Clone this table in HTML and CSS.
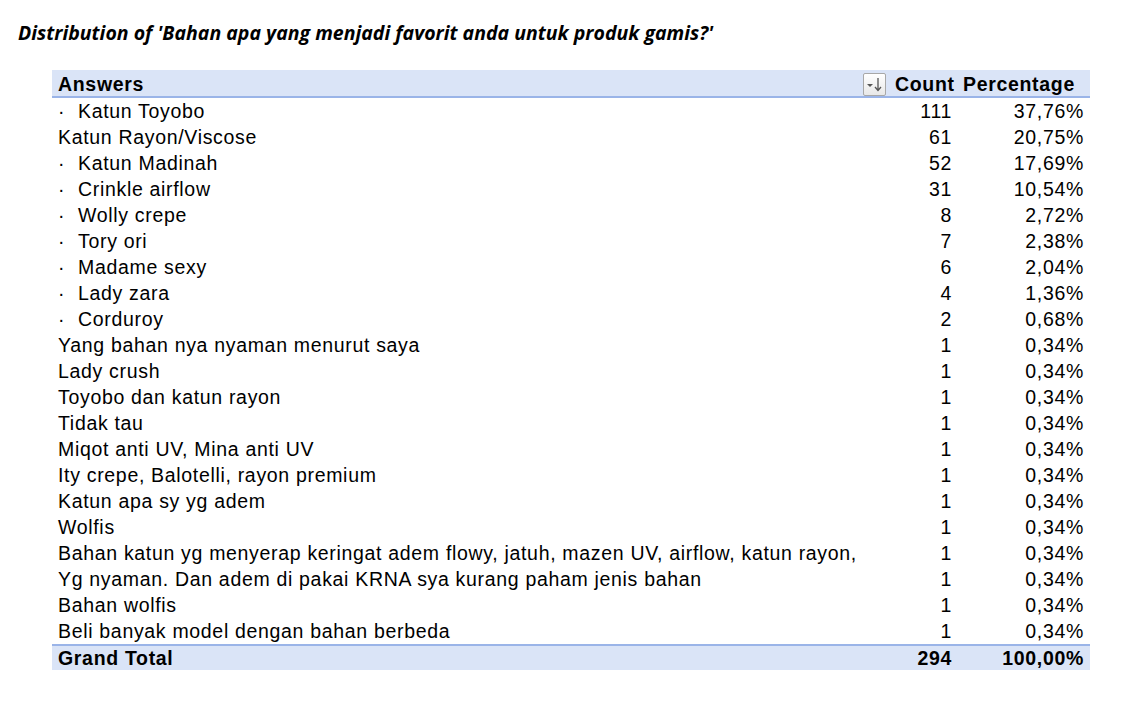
FILE: index.html
```html
<!DOCTYPE html>
<html>
<head>
<meta charset="utf-8">
<link rel="stylesheet" href="styles.css">
</head>
<body>
<h1 class="title">Distribution of 'Bahan apa yang menjadi favorit anda untuk produk gamis?'</h1>
<table class="pivot">
  <thead>
    <tr>
      <th class="c-ans">Answers</th>
      <th class="c-filter"><span class="filter"><svg width="21" height="21" viewBox="0 0 21 21"><path d="M3 10 L9 10 L6 13 Z" fill="#555"/><path d="M14 4 V16 M11 13 L14 16.5 L17 13" fill="none" stroke="#555" stroke-width="1.3"/></svg></span></th>
      <th class="c-num h-left">Count</th>
      <th class="c-pct h-left">Percentage</th>
    </tr>
  </thead>
  <tbody>
    <tr><td class="c-ans"><span class="dot">·</span>Katun Toyobo</td><td></td><td class="c-num">111</td><td class="c-pct">37,76%</td></tr>
    <tr><td class="c-ans">Katun Rayon/Viscose</td><td></td><td class="c-num">61</td><td class="c-pct">20,75%</td></tr>
    <tr><td class="c-ans"><span class="dot">·</span>Katun Madinah</td><td></td><td class="c-num">52</td><td class="c-pct">17,69%</td></tr>
    <tr><td class="c-ans"><span class="dot">·</span>Crinkle airflow</td><td></td><td class="c-num">31</td><td class="c-pct">10,54%</td></tr>
    <tr><td class="c-ans"><span class="dot">·</span>Wolly crepe</td><td></td><td class="c-num">8</td><td class="c-pct">2,72%</td></tr>
    <tr><td class="c-ans"><span class="dot">·</span>Tory ori</td><td></td><td class="c-num">7</td><td class="c-pct">2,38%</td></tr>
    <tr><td class="c-ans"><span class="dot">·</span>Madame sexy</td><td></td><td class="c-num">6</td><td class="c-pct">2,04%</td></tr>
    <tr><td class="c-ans"><span class="dot">·</span>Lady zara</td><td></td><td class="c-num">4</td><td class="c-pct">1,36%</td></tr>
    <tr><td class="c-ans"><span class="dot">·</span>Corduroy</td><td></td><td class="c-num">2</td><td class="c-pct">0,68%</td></tr>
    <tr><td class="c-ans">Yang bahan nya nyaman menurut saya</td><td></td><td class="c-num">1</td><td class="c-pct">0,34%</td></tr>
    <tr><td class="c-ans">Lady crush</td><td></td><td class="c-num">1</td><td class="c-pct">0,34%</td></tr>
    <tr><td class="c-ans">Toyobo dan katun rayon</td><td></td><td class="c-num">1</td><td class="c-pct">0,34%</td></tr>
    <tr><td class="c-ans">Tidak tau</td><td></td><td class="c-num">1</td><td class="c-pct">0,34%</td></tr>
    <tr><td class="c-ans">Miqot anti UV, Mina anti UV</td><td></td><td class="c-num">1</td><td class="c-pct">0,34%</td></tr>
    <tr><td class="c-ans">Ity crepe, Balotelli, rayon premium</td><td></td><td class="c-num">1</td><td class="c-pct">0,34%</td></tr>
    <tr><td class="c-ans">Katun apa sy yg adem</td><td></td><td class="c-num">1</td><td class="c-pct">0,34%</td></tr>
    <tr><td class="c-ans">Wolfis</td><td></td><td class="c-num">1</td><td class="c-pct">0,34%</td></tr>
    <tr><td class="c-ans">Bahan katun yg menyerap keringat adem flowy, jatuh, mazen UV, airflow, katun rayon,</td><td></td><td class="c-num">1</td><td class="c-pct">0,34%</td></tr>
    <tr><td class="c-ans">Yg nyaman. Dan adem di pakai KRNA sya kurang paham jenis bahan</td><td></td><td class="c-num">1</td><td class="c-pct">0,34%</td></tr>
    <tr><td class="c-ans">Bahan wolfis</td><td></td><td class="c-num">1</td><td class="c-pct">0,34%</td></tr>
    <tr><td class="c-ans">Beli banyak model dengan bahan berbeda</td><td></td><td class="c-num">1</td><td class="c-pct">0,34%</td></tr>
  </tbody>
  <tfoot>
    <tr><td class="c-ans">Grand Total</td><td></td><td class="c-num">294</td><td class="c-pct">100,00%</td></tr>
  </tfoot>
</table>
</body>
</html>
```
FILE: styles.css
```css
body {
  margin: 0;
  background: #fff;
  font-family: "Liberation Sans", Arial, sans-serif;
  color: #000;
}
.title {
  margin: 0;
  padding: 21px 0 0 18px;
  height: 70px;
  box-sizing: border-box;
  font-family: "Open Sans", "Liberation Sans", sans-serif;
  font-style: italic;
  font-weight: 700;
  font-size: 19.5px;
  letter-spacing: 0;
  line-height: 24px;
}
.pivot {
  margin: 0 0 0 52px;
  width: 1038px;
  border-collapse: collapse;
  font-size: 19.5px;
  letter-spacing: 0.68px;
}
.pivot th, .pivot td {
  padding: 0;
  height: 26px;
  line-height: 26px;
  white-space: nowrap;
}
.pivot thead th {
  background: #dae4f7;
  border-bottom: 2px solid #9ab4e8;
  font-weight: 700;
  height: 24px;
  line-height: 24px;
  padding-top: 2px;
  box-sizing: border-box;
}
.pivot tfoot td {
  background: #dae4f7;
  border-top: 2px solid #9ab4e8;
  font-weight: 700;
  height: 24px;
  line-height: 24px;
}
.c-ans { text-align: left; padding-left: 6px !important; }
.c-filter { width: 33px; text-align: left; padding-left: 0; }
.c-filter .filter { margin-left: 6px; margin-top: -3px; }
.c-num { width: 62px; text-align: right; padding-right: 6px !important; }
.c-pct { width: 126px; text-align: right; padding-right: 6px !important; }
.pivot th.h-left { text-align: left; padding-left: 5px !important; padding-right: 0 !important; }
.dot { display: inline-block; width: 20px; padding-left: 0; letter-spacing: 0; }
.filter {
  display: inline-block;
  width: 21px;
  height: 21px;
  vertical-align: middle;
  border: 1px solid #a8a8a8;
  border-radius: 2px;
  background: linear-gradient(#ffffff, #e8e8e8);
  line-height: 0;
}
```
